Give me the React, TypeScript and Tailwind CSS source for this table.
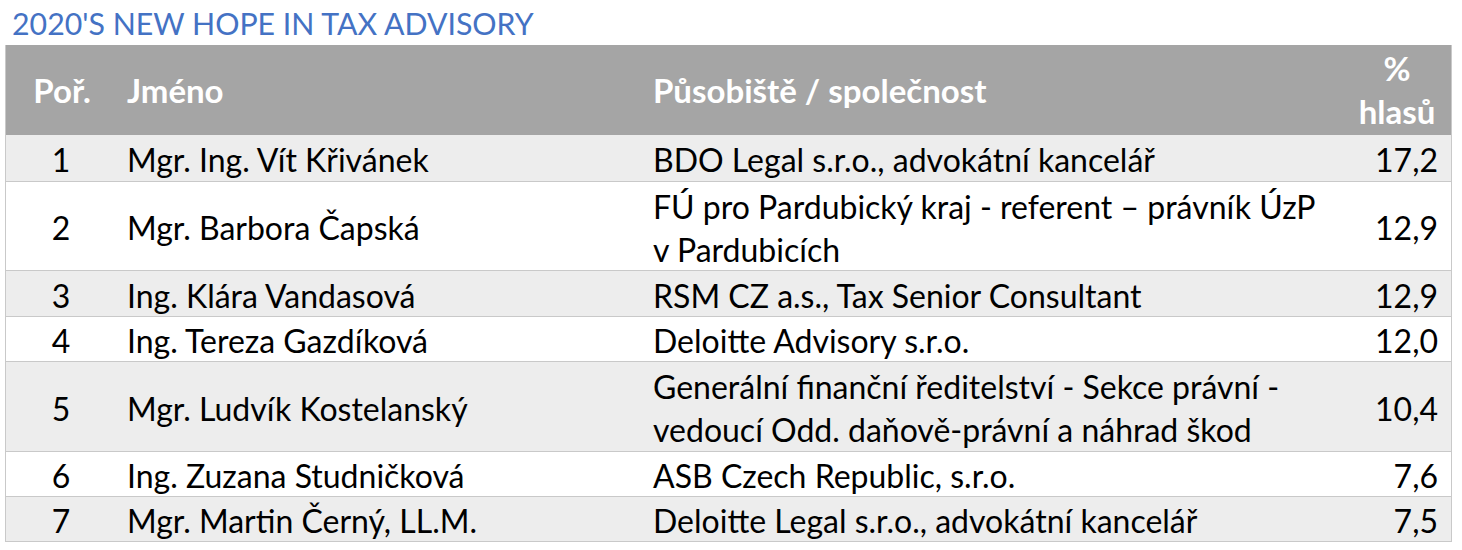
import React from "react";

type Row = { n: string; name: string; place: string[]; pct: string; h: string; bg: string };

const rows: Row[] = [
  { n: "1", name: "Mgr. Ing. Vít Křivánek", place: ["BDO Legal s.r.o., advokátní kancelář"], pct: "17,2", h: "h-[46px]", bg: "bg-[#ededed]" },
  { n: "2", name: "Mgr. Barbora Čapská", place: ["FÚ pro Pardubický kraj - referent – právník ÚzP", "v Pardubicích"], pct: "12,9", h: "h-[89px]", bg: "bg-white" },
  { n: "3", name: "Ing. Klára Vandasová", place: ["RSM CZ a.s., Tax Senior Consultant"], pct: "12,9", h: "h-[46px]", bg: "bg-[#ededed]" },
  { n: "4", name: "Ing. Tereza Gazdíková", place: ["Deloitte Advisory s.r.o."], pct: "12,0", h: "h-[45px]", bg: "bg-white" },
  { n: "5", name: "Mgr. Ludvík Kostelanský", place: ["Generální finanční ředitelství - Sekce právní -", "vedoucí Odd. daňově-právní a náhrad škod"], pct: "10,4", h: "h-[90px]", bg: "bg-[#ededed]" },
  { n: "6", name: "Ing. Zuzana Studničková", place: ["ASB Czech Republic, s.r.o."], pct: "7,6", h: "h-[45px]", bg: "bg-white" },
  { n: "7", name: "Mgr. Martin Černý, LL.M.", place: ["Deloitte Legal s.r.o., advokátní kancelář"], pct: "7,5", h: "h-[45px]", bg: "bg-[#ededed]" },
];

export default function App() {
  return (
    <div className="w-[1462px] h-[550px] bg-white overflow-hidden font-['Lato',sans-serif] text-black">
      <div className="pl-[12px] pt-[4px] h-[45px] text-[30.3px] leading-[38px] text-[#4472c4] whitespace-nowrap">
        2020'S NEW HOPE IN TAX ADVISORY
      </div>
      <div className="ml-[5px] w-[1447px] border-l border-r border-b border-[#c9c9c9]">
        <div className="flex h-[90px] bg-[#a5a5a5] text-white font-bold text-[33px] leading-[43px] whitespace-nowrap">
          <div className="w-[110px] flex items-center justify-center pl-[2px]">Poř.</div>
          <div className="w-[526px] flex items-center pl-[11px]">Jméno</div>
          <div className="w-[699px] flex items-center pl-[11px]">Působiště / společnost</div>
          <div className="flex-1 flex flex-col items-center justify-center pl-[2px]">
            <span>%</span>
            <span>hlasů</span>
          </div>
        </div>
        {rows.map((r, i) => (
          <div
            key={r.n}
            className={`flex ${r.h} ${r.bg} text-[32px] leading-[43px] whitespace-nowrap ${i > 0 ? "border-t border-[#c9c9c9]" : ""}`}
          >
            <div className="w-[110px] flex items-center justify-center pt-[3px]">{r.n}</div>
            <div className="w-[526px] flex items-center pl-[11px] pt-[3px]">{r.name}</div>
            <div className="w-[699px] flex flex-col justify-center pl-[11px] pt-[3px]">
              {r.place.map((p) => (
                <span key={p}>{p}</span>
              ))}
            </div>
            <div className="flex-1 flex items-center justify-end pr-[13px] pt-[3px]">{r.pct}</div>
          </div>
        ))}
      </div>
    </div>
  );
}
